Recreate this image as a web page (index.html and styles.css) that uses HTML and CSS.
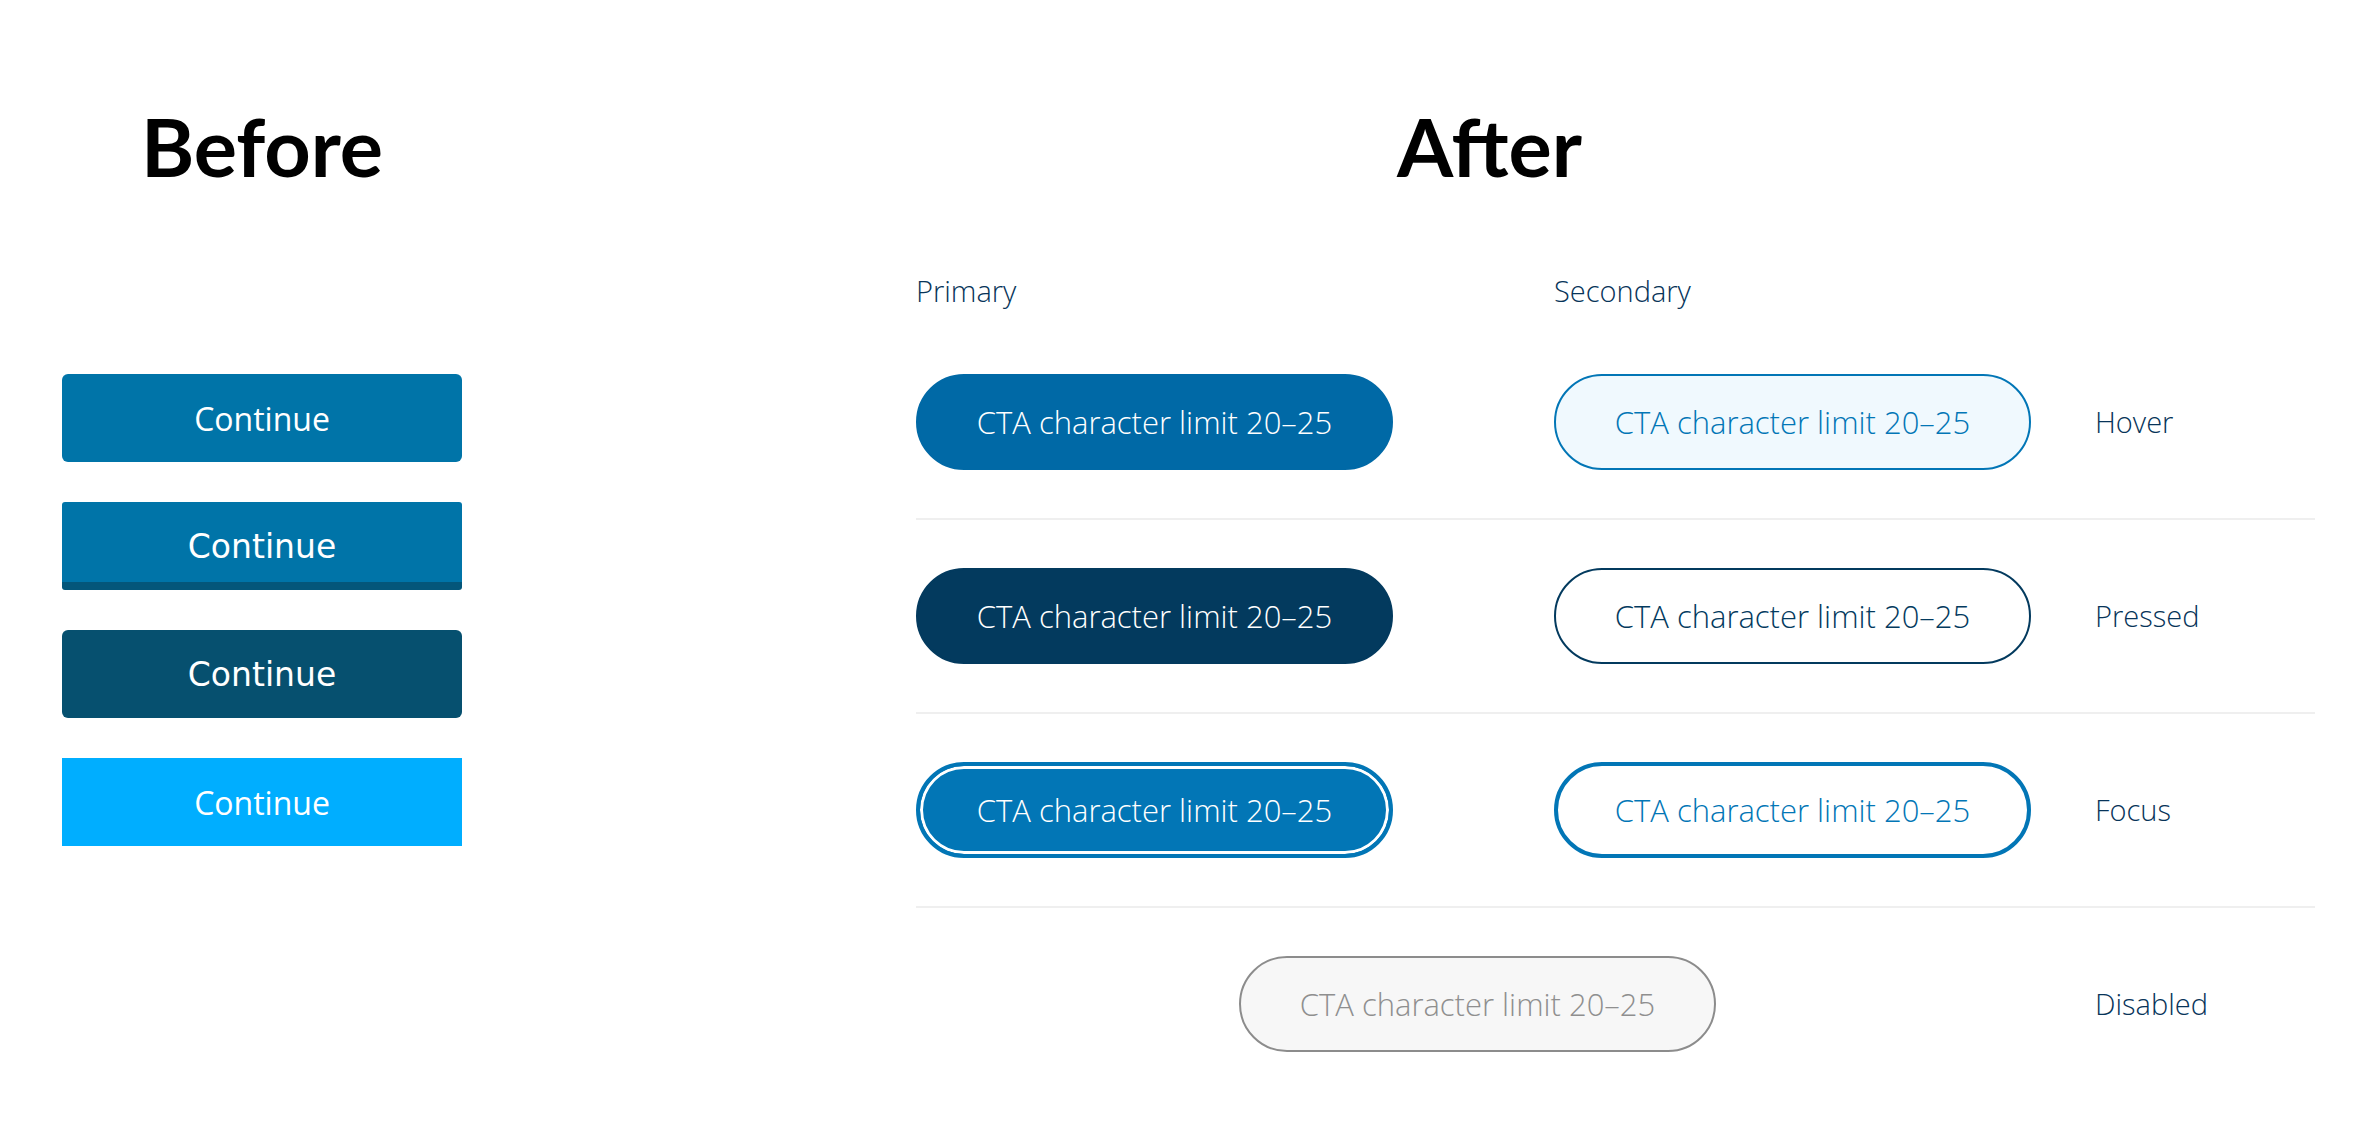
FILE: index.html
```html
<!DOCTYPE html>
<html lang="en">
<head>
    <meta charset="UTF-8">
    <meta name="viewport" content="width=device-width, initial-scale=1.0">
    <title>CTA Buttons - Before / After</title>
    <link rel="stylesheet" href="styles.css">
</head>
<body>
    <div class="page">
        <!-- Old buttons -->
        <section class="before">
            <h1 class="title">Before</h1>
            <div class="old-list">
                <button type="button" class="old-btn old-default">Continue</button>
                <button type="button" class="old-btn old-raised">Continue</button>
                <button type="button" class="old-btn old-dark">Continue</button>
                <button type="button" class="old-btn old-bright">Continue</button>
            </div>
        </section>

        <!-- New button states -->
        <section class="after">
            <h1 class="title after-title">After</h1>

            <div class="col-heads">
                <span class="label">Primary</span>
                <span class="label">Secondary</span>
            </div>

            <div class="state-row">
                <button type="button" class="cta primary is-hover">CTA character limit 20–25</button>
                <button type="button" class="cta secondary is-hover">CTA character limit 20–25</button>
                <span class="label">Hover</span>
            </div>

            <div class="state-row">
                <button type="button" class="cta primary is-pressed">CTA character limit 20–25</button>
                <button type="button" class="cta secondary is-pressed">CTA character limit 20–25</button>
                <span class="label">Pressed</span>
            </div>

            <div class="state-row">
                <button type="button" class="cta primary is-focus">CTA character limit 20–25</button>
                <button type="button" class="cta secondary is-focus">CTA character limit 20–25</button>
                <span class="label">Focus</span>
            </div>

            <div class="state-row last">
                <button type="button" class="cta is-disabled" disabled>CTA character limit 20–25</button>
                <span class="label">Disabled</span>
            </div>
        </section>
    </div>
</body>
</html>
```

FILE: styles.css
```css
/* Reset and base styles */
* {
    box-sizing: border-box;
}

body {
    margin: 0;
    padding: 0;
    background: #ffffff;
    font-family: 'Open Sans', 'Noto Sans', sans-serif;
    color: #073459;
}

button {
    margin: 0;
    padding: 0;
    cursor: pointer;
}

.page {
    display: flex;
    align-items: flex-start;
    padding-top: 105px;
}

/* Headings */
.title {
    margin: 0;
    font-family: 'Lato', sans-serif;
    font-weight: 700;
    font-size: 81px;
    line-height: 1;
    color: #000000;
}

/* Before column */
.before {
    width: 400px;
    margin-left: 62px;
}

.before .title {
    text-align: center;
}

.old-list {
    display: flex;
    flex-direction: column;
    gap: 40px;
    margin-top: 188px;
}

.old-btn {
    width: 400px;
    height: 88px;
    border: none;
    border-radius: 6px;
    color: #ffffff;
    font-family: 'Open Sans', sans-serif;
    font-size: 32px;
    font-weight: 400;
}

.old-default {
    background-color: #0074a8;
}

.old-raised {
    background-color: #0074a8;
    border-bottom: 8px solid #04567a;
    border-radius: 3px;
    font-family: 'DejaVu Sans', sans-serif;
    font-size: 33px;
    padding-top: 8px;
}

.old-dark {
    background-color: #06506f;
    font-family: 'DejaVu Sans', sans-serif;
    font-size: 33px;
}

.old-bright {
    background-color: #00aeff;
    border-radius: 0;
}

/* After column */
.after {
    width: 1399px;
    margin-left: 454px;
}

.after-title {
    padding-left: 481px;
}

.label {
    font-size: 29px;
    font-weight: 300;
    line-height: 40px;
    color: #073459;
}

.col-heads {
    display: grid;
    grid-template-columns: 638px 541px 1fr;
    margin-top: 85px;
    margin-bottom: 15px;
}

.state-row {
    display: grid;
    grid-template-columns: 638px 541px 1fr;
    align-items: center;
    padding: 48px 0;
    border-bottom: 2px solid #efefef;
}

.state-row.last {
    border-bottom: none;
}

/* CTA pill */
.cta {
    width: 477px;
    height: 96px;
    border-radius: 48px;
    border: 2px solid transparent;
    font-family: 'Open Sans', sans-serif;
    font-size: 31px;
    font-weight: 300;
    text-align: center;
}

.cta.primary {
    color: #ffffff;
}

.cta.primary.is-hover {
    background-color: #0069a6;
    border-color: #0069a6;
}

.cta.primary.is-pressed {
    background-color: #033a5e;
    border-color: #033a5e;
}

.cta.primary.is-focus {
    background-color: #0276b6;
    border: 4px solid #0276b6;
    box-shadow: inset 0 0 0 3px #ffffff;
}

.cta.secondary {
    background-color: #ffffff;
}

.cta.secondary.is-hover {
    background-color: #f0f9fe;
    border-color: #0276b6;
    color: #0276b6;
}

.cta.secondary.is-pressed {
    border-color: #033a5e;
    color: #033a5e;
}

.cta.secondary.is-focus {
    border: 4px solid #0276b6;
    color: #0276b6;
}

.cta.is-disabled {
    grid-column: 1 / 3;
    justify-self: center;
    margin-right: 56px;
    background-color: #f7f7f7;
    border-color: #8c8c8c;
    color: #8f8f8f;
    cursor: default;
}
```
